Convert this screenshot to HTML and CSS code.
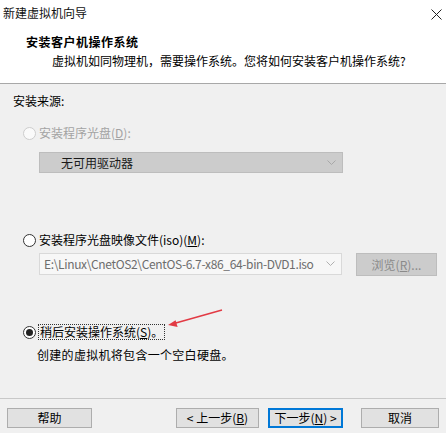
FILE: index.html
```html
<!DOCTYPE html>
<html lang="zh">
<head>
<meta charset="utf-8">
<link rel="stylesheet" href="styles.css">
</head>
<body>
<div class="window">
  <div class="top">
    <div class="titlebar">
      <span class="title">新建虚拟机向导</span>
      <svg class="close" width="11" height="11" viewBox="0 0 11 11"><path d="M0.5 0.5 L10.5 10.5 M10.5 0.5 L0.5 10.5" stroke="#222" stroke-width="1" fill="none"/></svg>
    </div>
    <div class="head-title">安装客户机操作系统</div>
    <div class="head-sub">虚拟机如同物理机，需要操作系统。您将如何安装客户机操作系统?</div>
  </div>
  <div class="main">
    <div class="label">安装来源:</div>
    <div class="radio-row r1 disabled">
      <span class="radio"></span>
      <span>安装程序光盘(<u>D</u>):</span>
    </div>
    <div class="select disabled-select">
      <span class="select-text">无可用驱动器</span>
      <svg class="chev" width="9" height="6" viewBox="0 0 9 6"><path d="M0.5 0.5 L4.5 4.5 L8.5 0.5" stroke="#a8a8a8" fill="none"/></svg>
    </div>
    <div class="radio-row r2">
      <span class="radio"></span>
      <span>安装程序光盘映像文件(iso)(<u>M</u>):</span>
    </div>
    <div class="iso-row">
      <div class="select iso">
        <span class="iso-text">E:\Linux\CnetOS2\CentOS-6.7-x86_64-bin-DVD1.iso</span>
        <svg class="chev" width="9" height="6" viewBox="0 0 9 6"><path d="M0.5 0.5 L4.5 4.5 L8.5 0.5" stroke="#b0b0b0" fill="none"/></svg>
      </div>
      <div class="browse">浏览(<u>R</u>)...</div>
    </div>
    <div class="radio-row r3">
      <span class="radio checked"></span>
      <span class="focus">稍后安装操作系统(<u>S</u>)。</span>
      <svg class="arrow" width="240" height="40" viewBox="0 0 240 40">
        <line x1="222" y1="6" x2="174" y2="19.5" stroke="#e23a44" stroke-width="1.6"/>
        <polygon points="168,21 177.6,22.9 175.6,16.2" fill="#e23a44"/>
      </svg>
    </div>
    <div class="desc">创建的虚拟机将包含一个空白硬盘。</div>
  </div>
  <div class="footer">
    <div class="btn help">帮助</div>
    <div class="btn back">&lt; 上一步(<u>B</u>)</div>
    <div class="btn next">下一步(<u>N</u>) &gt;</div>
    <div class="btn cancel">取消</div>
  </div>
</div>
</body>
</html>
```

FILE: styles.css
```css
* { box-sizing: border-box; }
html, body { margin: 0; padding: 0; }
body {
  width: 446px;
  height: 433px;
  overflow: hidden;
  background: #f0f0f0;
  font-family: "Noto Sans CJK SC", "Microsoft YaHei", sans-serif;
  font-size: 12px;
  line-height: 16px;
  color: #000;
}
.window { display: flex; flex-direction: column; height: 433px; }
.top {
  background: #fff;
  height: 84px;
  border-bottom: 1px solid #a8a8a8;
}
.titlebar {
  display: flex;
  justify-content: space-between;
  align-items: center;
  height: 26px;
  padding: 0 4px 0 3px;
}
.title { color: #111; }
.close { margin-top: 2px; }
.head-title {
  margin-top: 8px;
  padding-left: 26px;
  font-weight: bold;
  letter-spacing: 0.5px;
}
.head-sub {
  margin-top: 3px;
  padding-left: 52px;
  letter-spacing: 0;
}
.main {
  height: 314px;
  display: flex;
  flex-direction: column;
}
.label { margin-top: 9px; padding-left: 13px; }
.radio-row {
  display: flex;
  align-items: center;
  padding-left: 23px;
  height: 16px;
}
.radio {
  width: 13px;
  height: 13px;
  border: 1px solid #333;
  border-radius: 50%;
  background: #fff;
  margin-right: 3px;
  flex: none;
  position: relative;
}
.radio.checked::after {
  content: "";
  position: absolute;
  left: 2px;
  top: 2px;
  width: 7px;
  height: 7px;
  border-radius: 50%;
  background: #222;
}
.disabled { color: #a3a3a3; }
.disabled .radio { border-color: #cdcdcd; background: #fafafa; }
.r1 { margin-top: 16px; }
.select {
  display: flex;
  align-items: center;
  justify-content: space-between;
  margin-left: 39px;
  width: 304px;
  height: 21px;
  padding: 0 6px 0 0;
}
.disabled-select {
  margin-top: 11px;
  background: #cccccc;
  border: 1px solid #bdbdbd;
}
.select-text { padding-left: 21px; color: #1a1a1a; }
.r2 { margin-top: 59px; }
.iso-row {
  display: flex;
  margin-top: 5px;
  height: 23px;
  align-items: flex-start;
}
.iso {
  margin-left: 39px;
  width: 303px;
  height: 22px;
  background: #f7f7f7;
  border: 1px solid #d9d9d9;
}
.iso-text {
  padding-left: 4px;
  color: #6d6d6d;
  letter-spacing: -0.35px;
  white-space: nowrap;
}
.browse {
  margin-left: 14px;
  width: 81px;
  height: 23px;
  background: #cccccc;
  border: 1px solid #bdbdbd;
  color: #8a8a8a;
  display: flex;
  align-items: center;
  justify-content: center;
}
.r3 { margin-top: 48px; position: relative; }
.focus {
  border: 1px dotted #333;
  padding: 0 1px;
  line-height: 14px;
  margin-left: -1px;
}
.arrow { position: absolute; left: 0; top: -20px; }
.desc { margin-top: 7px; padding-left: 37px; letter-spacing: 0.3px; }
.footer {
  border-top: 1px solid #c8c8c8;
  height: 35px;
  display: flex;
  align-items: flex-start;
  padding-top: 9px;
}
.btn {
  height: 20px;
  background: #e1e1e1;
  border: 1px solid #adadad;
  display: flex;
  align-items: center;
  justify-content: center;
}
.help { margin-left: 7px; width: 85px; }
.back { margin-left: 84px; width: 83px; }
.next { margin-left: 9px; width: 75px; border: 1px solid #0078d7; box-shadow: inset 0 0 0 1px #0078d7; }
.cancel { margin-left: 18px; width: 78px; }
```
